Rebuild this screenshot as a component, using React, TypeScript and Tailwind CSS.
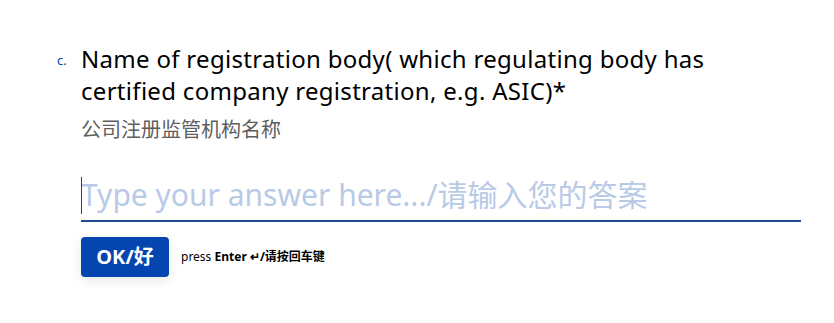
import React from "react";

export default function App() {
  return (
    <div className="w-[834px] h-[323px] bg-white overflow-hidden">
      <div className="pl-[57px] pt-[43px] font-['Noto_Sans','Noto_Sans_CJK_SC',sans-serif]">
        <div className="flex">
          <div className="w-[24px] shrink-0 pt-[9px] text-[13px] leading-[16px] text-[#0445af]">c.</div>
          <div className="w-[720px]">
            <div className="text-[24px] leading-[32px] tracking-[0.3px] text-black">
              Name of registration body( which regulating body has certified company registration, e.g. ASIC)*
            </div>
            <div className="mt-[8px] text-[20px] leading-[28px] text-[#5e5e5e] font-['Noto_Sans_CJK_SC',sans-serif]">
              公司注册监管机构名称
            </div>
            <div className="mt-[33px] relative border-b-2 border-[#1f4f8f] pb-[6px]">
              <div className="absolute left-0 top-[1px] w-[1px] h-[37px] bg-[#0445af]" />
              <div className="text-[30px] leading-[38px] text-[#b9cae6] whitespace-nowrap">
                Type your answer here.../请输入您的答案
              </div>
            </div>
            <div className="mt-[15px] flex items-center">
              <button className="h-[40px] w-[88px] rounded-[4px] bg-[#0445af] text-white text-[20px] font-bold shadow-[0_3px_12px_rgba(0,0,0,0.1)]">
                OK/好
              </button>
              <div className="ml-[12px] text-[12px] text-black">
                press <span className="font-bold">Enter ↵</span>
                <span className="font-bold">/请按回车键</span>
              </div>
            </div>
          </div>
        </div>
      </div>
    </div>
  );
}
